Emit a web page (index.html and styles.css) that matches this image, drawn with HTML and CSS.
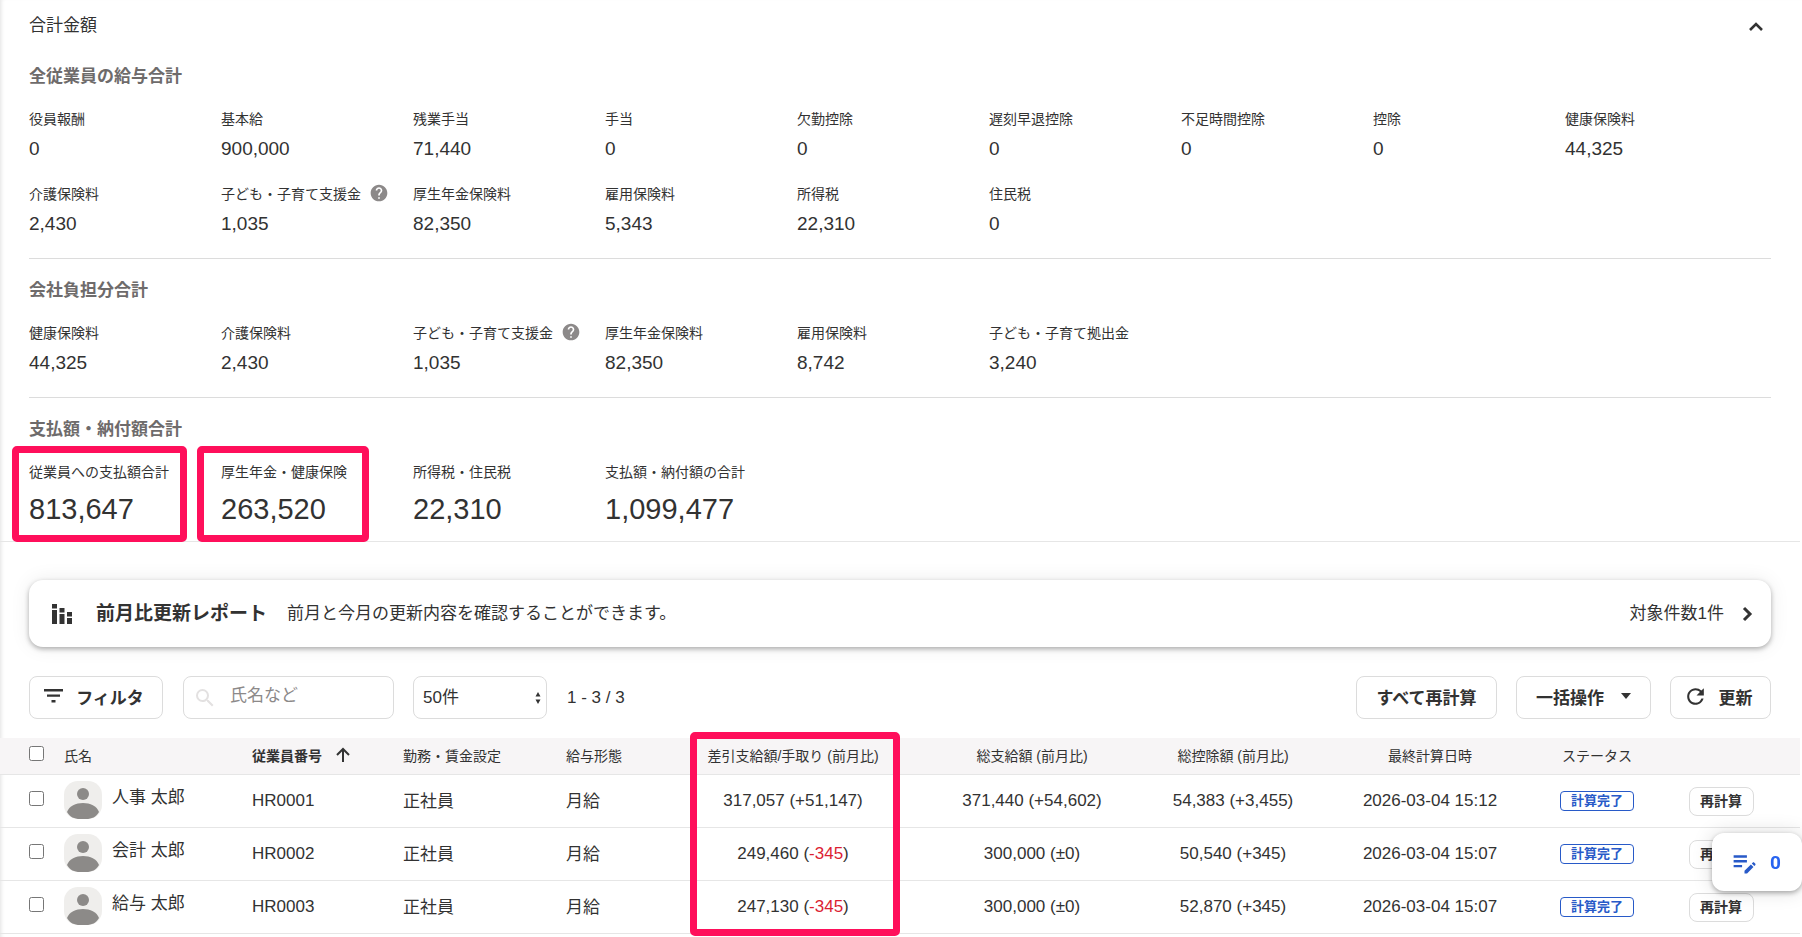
FILE: index.html
```html
<!DOCTYPE html>
<html lang="ja">
<head>
  <meta charset="UTF-8" />
  <meta name="viewport" content="width=device-width, initial-scale=1.0"/>
  <title>給与計算</title>
  <link rel="stylesheet" href="styles.css">
</head>
<body>

  <section class="summary">
    <div class="summary-head">
      <h1>合計金額</h1>
      <button class="toggle" aria-label="閉じる">
        <svg width="24" height="24" viewBox="0 0 24 24"><path d="M6 15l6-6 6 6" fill="none" stroke="#333" stroke-width="2.6"/></svg>
      </button>
    </div>

    <div class="group">
      <h2>全従業員の給与合計</h2>
      <dl class="items">
        <div><dt>役員報酬</dt><dd>0</dd></div>
        <div><dt>基本給</dt><dd>900,000</dd></div>
        <div><dt>残業手当</dt><dd>71,440</dd></div>
        <div><dt>手当</dt><dd>0</dd></div>
        <div><dt>欠勤控除</dt><dd>0</dd></div>
        <div><dt>遅刻早退控除</dt><dd>0</dd></div>
        <div><dt>不足時間控除</dt><dd>0</dd></div>
        <div><dt>控除</dt><dd>0</dd></div>
        <div><dt>健康保険料</dt><dd>44,325</dd></div>
        <div><dt>介護保険料</dt><dd>2,430</dd></div>
        <div>
          <dt>子ども・子育て支援金
            <svg class="help" width="20" height="20" viewBox="0 0 24 24"><path d="M12 2C6.48 2 2 6.48 2 12s4.48 10 10 10 10-4.48 10-10S17.52 2 12 2zm1 17h-2v-2h2v2zm2.07-7.75l-.9.92C13.45 12.9 13 13.5 13 15h-2v-.5c0-1.1.45-2.1 1.17-2.83l1.24-1.26c.37-.36.59-.86.59-1.41 0-1.1-.9-2-2-2s-2 .9-2 2H8c0-2.21 1.79-4 4-4s4 1.79 4 4c0 .88-.36 1.68-.93 2.25z" fill="#8c8989"/></svg>
          </dt>
          <dd>1,035</dd>
        </div>
        <div><dt>厚生年金保険料</dt><dd>82,350</dd></div>
        <div><dt>雇用保険料</dt><dd>5,343</dd></div>
        <div><dt>所得税</dt><dd>22,310</dd></div>
        <div><dt>住民税</dt><dd>0</dd></div>
      </dl>
    </div>

    <div class="group">
      <h2>会社負担分合計</h2>
      <dl class="items">
        <div><dt>健康保険料</dt><dd>44,325</dd></div>
        <div><dt>介護保険料</dt><dd>2,430</dd></div>
        <div>
          <dt>子ども・子育て支援金
            <svg class="help" width="20" height="20" viewBox="0 0 24 24"><path d="M12 2C6.48 2 2 6.48 2 12s4.48 10 10 10 10-4.48 10-10S17.52 2 12 2zm1 17h-2v-2h2v2zm2.07-7.75l-.9.92C13.45 12.9 13 13.5 13 15h-2v-.5c0-1.1.45-2.1 1.17-2.83l1.24-1.26c.37-.36.59-.86.59-1.41 0-1.1-.9-2-2-2s-2 .9-2 2H8c0-2.21 1.79-4 4-4s4 1.79 4 4c0 .88-.36 1.68-.93 2.25z" fill="#8c8989"/></svg>
          </dt>
          <dd>1,035</dd>
        </div>
        <div><dt>厚生年金保険料</dt><dd>82,350</dd></div>
        <div><dt>雇用保険料</dt><dd>8,742</dd></div>
        <div><dt>子ども・子育て拠出金</dt><dd>3,240</dd></div>
      </dl>
    </div>

    <div class="group total">
      <h2>支払額・納付額合計</h2>
      <dl class="items">
        <div class="mark"><dt>従業員への支払額合計</dt><dd>813,647</dd></div>
        <div class="mark mark-wide"><dt>厚生年金・健康保険</dt><dd>263,520</dd></div>
        <div><dt>所得税・住民税</dt><dd>22,310</dd></div>
        <div><dt>支払額・納付額の合計</dt><dd>1,099,477</dd></div>
      </dl>
    </div>
  </section>

  <a class="report" href="#">
    <svg width="20" height="20" viewBox="0 0 20 20" fill="#333"><path d="M0 0h5v4.500H0zM0 6h5v14H0zM7.500 4h5v4.500h-5zM7.500 10h5v10h-5zM15 8h5v4.500h-5zM15 14h5v6h-5z"/></svg>
    <strong>前月比更新レポート</strong>
    <span>前月と今月の更新内容を確認することができます。</span>
    <span class="count">対象件数1件</span>
    <svg width="12" height="16" viewBox="0 0 12 16"><path d="M2 2l6 6-6 6" fill="none" stroke="#333" stroke-width="3"/></svg>
  </a>

  <div class="toolbar">
    <button class="btn btn-filter">
      <svg width="20" height="14" viewBox="0 0 20 14" fill="#333"><path d="M0 0h19v2.4H0zM3 5.4h13v2.4H3zM7.500 11h4v2.4h-4z"/></svg>
      フィルタ
    </button>
    <label class="search">
      <svg width="18" height="18" viewBox="3 3 18 18" fill="#e3e1e1"><path d="M15.500 14h-.79l-.28-.27A6.471 6.471 0 0016 9.500 6.500 6.500 0 109.500 16c1.610 0 3.090-.59 4.230-1.570l.27.28v.79l5 4.990L20.490 19l-4.990-5zm-6 0C7.010 14 5 11.990 5 9.500S7.010 5 9.500 5 14 7.010 14 9.500 11.990 14 9.500 14z"/></svg>
      <input type="text" placeholder="氏名など" aria-label="氏名など" />
    </label>
    <div class="per-page">
      <select aria-label="表示件数"><option>50件</option></select>
      <svg width="6" height="12" viewBox="0 0 6 12" fill="#333"><path d="M3 0l2.500 4.500h-5zM3 12l2.500-4.500h-5z"/></svg>
    </div>
    <span class="range">1 - 3 / 3</span>
    <div class="actions">
      <button class="btn btn-all">すべて再計算</button>
      <button class="btn btn-bulk">一括操作
        <svg width="10" height="6" viewBox="0 0 10 6" fill="#333"><path d="M0 0h10L5 6z"/></svg>
      </button>
      <button class="btn btn-reload">
        <svg width="25" height="25" viewBox="0 0 24 24"><path d="M17.65 6.35A7.958 7.958 0 0012 4c-4.42 0-7.99 3.58-7.99 8s3.57 8 7.99 8c3.73 0 6.84-2.55 7.73-6h-2.08A5.99 5.99 0 0112 18c-3.31 0-6-2.69-6-6s2.69-6 6-6c1.66 0 3.14.69 4.22 1.78L13 11h7V4l-2.35 2.35z" fill="#333"/></svg>
        更新
      </button>
    </div>
  </div>

  <table class="payroll">
    <colgroup>
      <col class="c-check"><col class="c-name"><col class="c-no"><col class="c-type"><col class="c-pay">
      <col class="c-net"><col class="c-gross"><col class="c-deduct"><col class="c-date"><col class="c-status"><col class="c-action">
    </colgroup>
    <thead>
      <tr>
        <th class="check"><input type="checkbox" aria-label="すべて選択" /></th>
        <th>氏名</th>
        <th class="sorted">従業員番号
          <svg width="14" height="16" viewBox="0 0 14 16" fill="none" stroke="#333" stroke-width="2"><path d="M7 15V2M1 8l6-6 6 6"/></svg>
        </th>
        <th>勤務・賃金設定</th>
        <th>給与形態</th>
        <th class="center">差引支給額/手取り (前月比)</th>
        <th class="center">総支給額 (前月比)</th>
        <th class="center">総控除額 (前月比)</th>
        <th class="center">最終計算日時</th>
        <th class="center">ステータス</th>
        <th></th>
      </tr>
    </thead>
    <tbody>
      <tr>
        <td class="check"><input type="checkbox" aria-label="人事 太郎" /></td>
        <td><div class="person">
          <svg width="38" height="38" viewBox="0 0 38 38"><rect width="38" height="38" rx="14" fill="#efeeec"/><circle cx="19" cy="13" r="6" fill="#8c8a88"/><path d="M3 31c2-6 9-9 16-9s14 3 16 9c-3 5-7 7-13 7h-6c-6 0-10-2-13-7z" fill="#8c8a88"/></svg>
          <span>人事 太郎</span>
        </div></td>
        <td>HR0001</td>
        <td class="term">正社員</td>
        <td class="term">月給</td>
        <td class="center">317,057 (+51,147)</td>
        <td class="center">371,440 (+54,602)</td>
        <td class="center">54,383 (+3,455)</td>
        <td class="center">2026-03-04 15:12</td>
        <td class="center"><span class="badge">計算完了</span></td>
        <td class="center"><button class="btn-small">再計算</button></td>
      </tr>
      <tr>
        <td class="check"><input type="checkbox" aria-label="会計 太郎" /></td>
        <td><div class="person">
          <svg width="38" height="38" viewBox="0 0 38 38"><rect width="38" height="38" rx="14" fill="#efeeec"/><circle cx="19" cy="13" r="6" fill="#8c8a88"/><path d="M3 31c2-6 9-9 16-9s14 3 16 9c-3 5-7 7-13 7h-6c-6 0-10-2-13-7z" fill="#8c8a88"/></svg>
          <span>会計 太郎</span>
        </div></td>
        <td>HR0002</td>
        <td class="term">正社員</td>
        <td class="term">月給</td>
        <td class="center">249,460 (<span class="minus">-345</span>)</td>
        <td class="center">300,000 (±0)</td>
        <td class="center">50,540 (+345)</td>
        <td class="center">2026-03-04 15:07</td>
        <td class="center"><span class="badge">計算完了</span></td>
        <td class="center"><button class="btn-small">再計算</button></td>
      </tr>
      <tr>
        <td class="check"><input type="checkbox" aria-label="給与 太郎" /></td>
        <td><div class="person">
          <svg width="38" height="38" viewBox="0 0 38 38"><rect width="38" height="38" rx="14" fill="#efeeec"/><circle cx="19" cy="13" r="6" fill="#8c8a88"/><path d="M3 31c2-6 9-9 16-9s14 3 16 9c-3 5-7 7-13 7h-6c-6 0-10-2-13-7z" fill="#8c8a88"/></svg>
          <span>給与 太郎</span>
        </div></td>
        <td>HR0003</td>
        <td class="term">正社員</td>
        <td class="term">月給</td>
        <td class="center net">247,130 (<span class="minus">-345</span>)</td>
        <td class="center">300,000 (±0)</td>
        <td class="center">52,870 (+345)</td>
        <td class="center">2026-03-04 15:07</td>
        <td class="center"><span class="badge">計算完了</span></td>
        <td class="center"><button class="btn-small">再計算</button></td>
      </tr>
    </tbody>
  </table>

  <button class="memo" aria-label="メモ 0件">
    <svg width="29" height="29" viewBox="0 0 24 24" fill="#285ac8"><path d="M3 10h11v2H3v-2zm0-2h11V6H3v2zm0 8h7v-2H3v2zm15.010-3.130.71-.71c.39-.39 1.020-.39 1.410 0l.71.71c.39.39.39 1.020 0 1.410l-.71.71-2.120-2.120zm-.71.71-5.300 5.300V21h2.120l5.300-5.300-2.120-2.120z"/></svg>
    <span>0</span>
  </button>

</body>
</html>
```
FILE: styles.css
```css
body {
  margin: 0;
  padding: 0 2px 4px 0;
  font-family: "Liberation Sans", "Noto Sans CJK JP", sans-serif;
  font-size: 17px;
  color: #323232;
  background: #fff;
  box-shadow: inset 4px 0 4px -3px rgba(0,0,0,0.12);
}
h1, h2, dl, dd {
  margin: 0;
}
button, input, select {
  font-family: inherit;
  color: inherit;
}
svg {
  flex: none;
}
.summary {
  padding: 12px 29px 0;
  border-bottom: 1px solid #e6e6e6;
}
.summary-head {
  display: flex;
  justify-content: space-between;
  align-items: flex-start;
  height: 33px;
}
h1 {
  font-size: 17px;
  font-weight: normal;
  line-height: 28px;
}
.toggle {
  display: flex;
  padding: 3px 0 0;
  margin-right: 3px;
  border: none;
  background: none;
}
.group {
  padding: 20px 0 19px;
  border-bottom: 1px solid #dcdcdc;
}
.group:last-child {
  padding-bottom: 12px;
  border-bottom: none;
}
h2 {
  font-size: 17px;
  line-height: 24px;
  color: #6e6b6b;
}
.items {
  display: grid;
  grid-template-columns: repeat(auto-fill, 176px);
  gap: 18px 16px;
  margin-top: 18px;
}
dt {
  display: flex;
  align-items: center;
  gap: 8px;
  height: 22px;
  font-size: 14px;
  white-space: nowrap;
}
dd {
  margin-top: 5px;
  font-size: 19px;
  line-height: 30px;
}
.total dd {
  margin-top: 7px;
  font-size: 29px;
  line-height: 40px;
}

/* pink frames */
.mark, .net {
  position: relative;
}
.mark::after, .net::after {
  content: "";
  position: absolute;
  box-sizing: border-box;
  border: 7px solid #ff0f5b;
  border-radius: 5px;
}
.mark::after {
  inset: -14px 18px -13px -17px;
}
.mark-wide::after {
  inset: -14px 28px -13px -24px;
}
/* starts in the last row and reaches up over the whole column */
.net::after {
  bottom: -3px;
  left: 10px;
  right: 6px;
  height: 204px;
  pointer-events: none;
}

.report {
  display: flex;
  align-items: center;
  height: 67px;
  margin: 38px 29px 29px;
  padding: 0 17px 0 23px;
  box-sizing: border-box;
  border-radius: 14px;
  background: #fff;
  box-shadow: 0 2px 5px rgba(0,0,0,0.3), 0 0 20px rgba(0,0,0,0.08);
  color: inherit;
  text-decoration: none;
}
.report strong, .report span {
  padding-bottom: 5px;
}
.report strong {
  margin: 0 20px 0 24px;
  font-size: 19px;
}
.report .count {
  margin: 0 18px 0 auto;
}

.toolbar {
  display: flex;
  align-items: center;
  margin: 0 29px 19px;
}
.btn, .search, .per-page select {
  display: flex;
  align-items: center;
  justify-content: center;
  height: 43px;
  box-sizing: border-box;
  border: 1px solid #dcdcdc;
  border-radius: 8px;
  background: #fff;
  font-size: 17px;
}
.btn {
  padding: 0 0 3px;
  font-weight: bold;
}
.btn-filter {
  width: 134px;
  padding-right: 4px;
  gap: 12px;
}
.search {
  width: 211px;
  margin: 0 19px 0 20px;
  padding: 0 12px;
  gap: 16px;
}
.search input {
  width: 100%;
  min-width: 0;
  padding: 0 0 3px;
  border: none;
  outline: none;
  background: none;
  font-size: 17px;
}
.search input::placeholder {
  color: #8c8989;
}
.per-page {
  position: relative;
}
.per-page select {
  width: 134px;
  padding: 0 9px;
  appearance: none;
}
.per-page svg {
  position: absolute;
  top: 16px;
  right: 6px;
}
.range {
  margin-left: 20px;
}
.actions {
  display: flex;
  gap: 19px;
  margin-left: auto;
}
.btn-all {
  width: 141px;
}
.btn-bulk {
  width: 135px;
  gap: 17px;
}
.btn-reload {
  width: 101px;
  padding-right: 6px;
  gap: 11px;
}

.payroll {
  width: 100%;
  table-layout: fixed;
  border-collapse: separate;
  border-spacing: 0;
}
.c-check { width: 64px; }
.c-name { width: 188px; }
.c-no { width: 151px; }
.c-type { width: 163px; }
.c-pay { width: 114px; }
.c-net { width: 226px; }
.c-gross { width: 252px; }
.c-deduct { width: 150px; }
.c-date { width: 244px; }
.c-status { width: 90px; }
.c-action { width: 158px; }
th, td {
  padding: 0;
  box-sizing: border-box;
  border-bottom: 1px solid #e6e6e6;
  text-align: left;
  white-space: nowrap;
}
th {
  height: 37px;
  padding-bottom: 2px;
  background: #f7f5f6;
  font-size: 14px;
  font-weight: normal;
}
td {
  height: 53px;
}
.term {
  padding-bottom: 4px;
}
.sorted {
  font-weight: bold;
}
.sorted svg {
  margin-left: 10px;
  vertical-align: -2px;
}
.center {
  text-align: center;
}
.check {
  padding: 0 0 5px 29px;
}
.check input {
  display: block;
  width: 15px;
  height: 15px;
  margin: 0;
}
.person {
  display: flex;
  gap: 10px;
  padding-bottom: 3px;
}
.person span {
  line-height: 34px;
}
.minus {
  color: #dc1e32;
}
.badge {
  display: inline-block;
  width: 74px;
  box-sizing: border-box;
  border: 1px solid #285ac8;
  border-radius: 4px;
  color: #285ac8;
  font-size: 13px;
  font-weight: bold;
  line-height: 18px;
  vertical-align: middle;
}
.btn-small {
  width: 65px;
  height: 29px;
  padding: 0 0 3px;
  border: 1px solid #dcdcdc;
  border-radius: 8px;
  background: #fff;
  font-size: 14px;
  font-weight: bold;
  vertical-align: middle;
}
.memo {
  position: fixed;
  right: 0;
  bottom: 46px;
  display: flex;
  align-items: center;
  gap: 11px;
  width: 90px;
  height: 58px;
  padding: 0 0 0 18px;
  border: none;
  border-radius: 12px;
  background: #fff;
  box-shadow: 0 2px 5px rgba(0,0,0,0.3), 0 0 20px rgba(0,0,0,0.15);
  color: #2864f0;
  font-family: Roboto, sans-serif;
  font-size: 19px;
  font-weight: bold;
}
```
